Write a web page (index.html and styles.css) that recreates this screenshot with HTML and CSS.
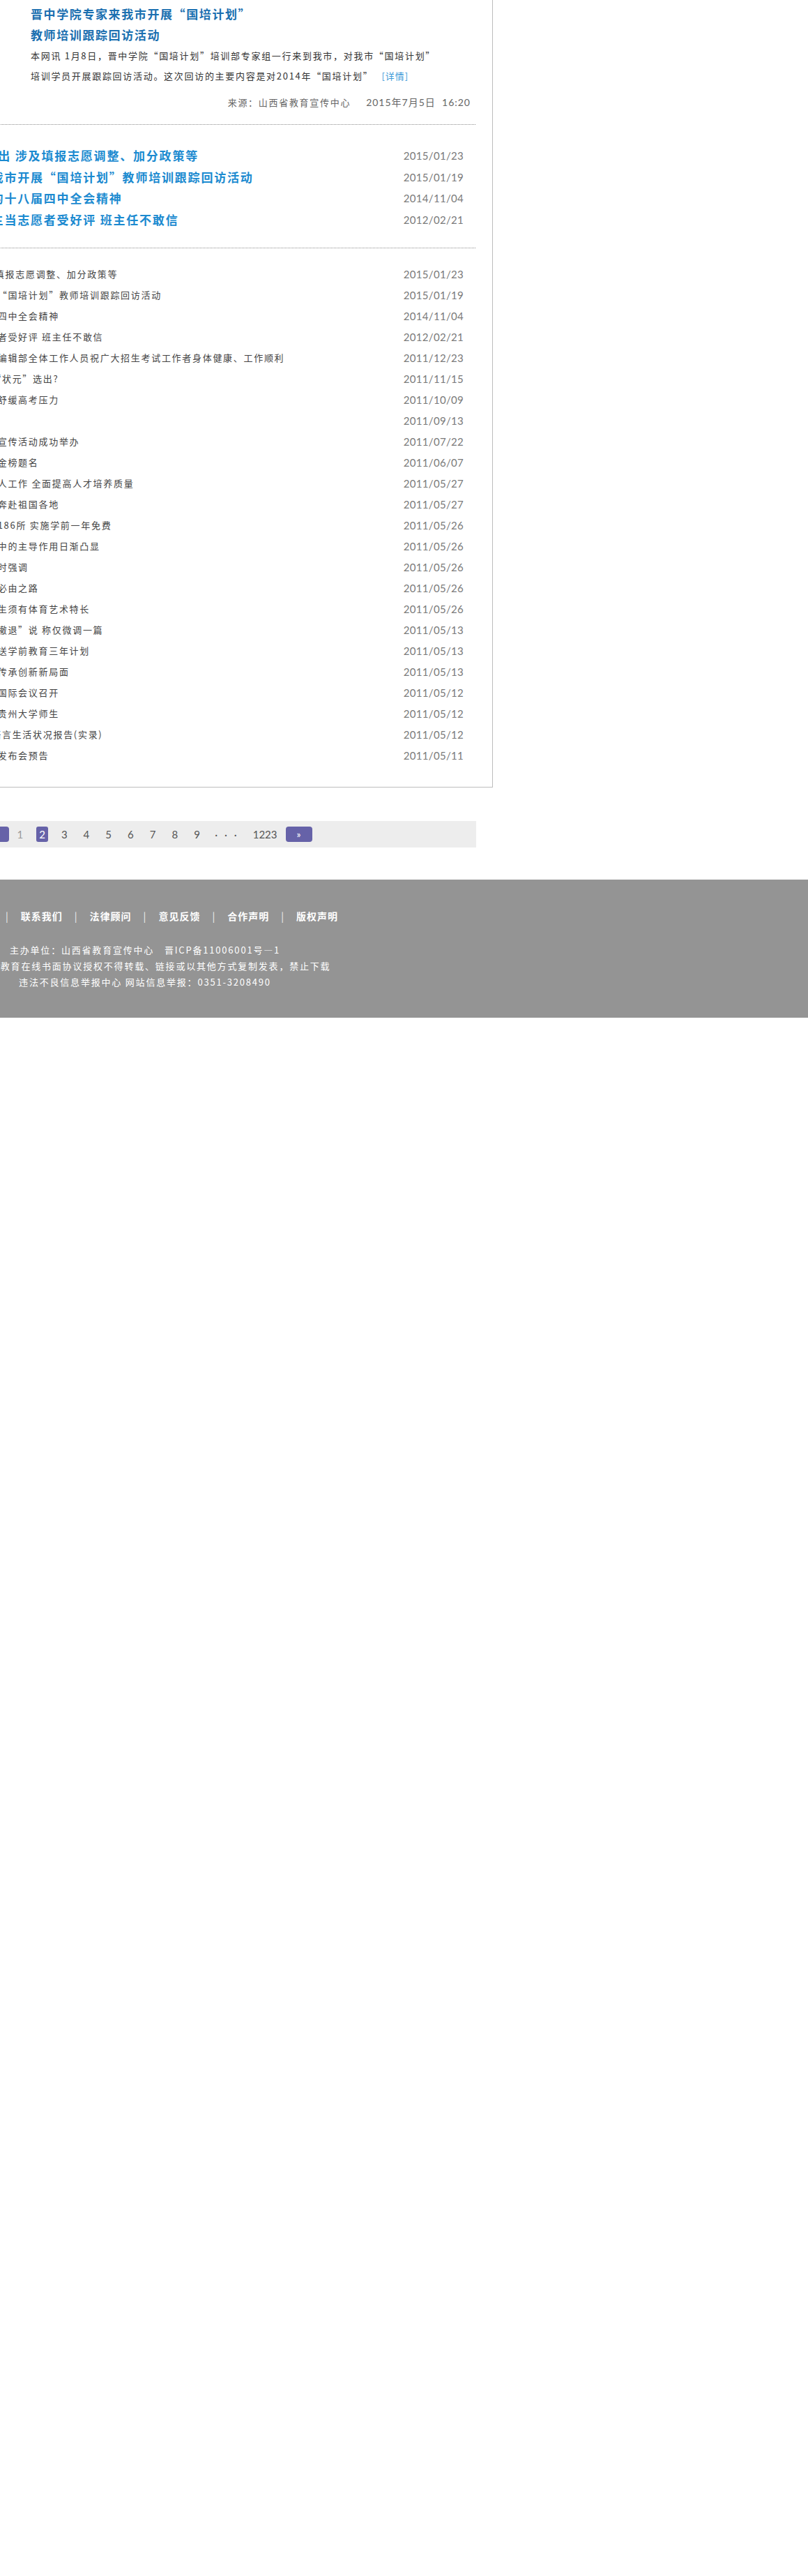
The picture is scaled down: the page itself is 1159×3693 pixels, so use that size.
FILE: index.html
```html
<!DOCTYPE html>
<html lang="zh-CN">
<head>
<meta charset="utf-8">
<title>教育新闻</title>
<link rel="stylesheet" href="styles.css">
</head>
<body>
<div class="page">
  <div class="news-box">
    <div class="headline">
      <div class="thumb"></div>
      <div class="headline-body">
        <h2 class="headline-title"><a href="#">晋中学院专家来我市开展“国培计划”<br>教师培训跟踪回访活动</a></h2>
        <p class="headline-text">本网讯 1月8日，晋中学院“国培计划”培训部专家组一行来到我市，对我市“国培计划”<br>培训学员开展跟踪回访活动。这次回访的主要内容是对2014年“国培计划”<a class="more" href="#">[详情]</a></p>
        <div class="headline-meta"><span>来源：山西省教育宣传中心</span><span class="meta-date">2015年7月5日&nbsp;&nbsp;16:20</span></div>
      </div>
    </div>

    <ul class="hot-list">
      <li><a class="hot-title" href="#">2015年高考新政出 涉及填报志愿调整、加分政策等</a><span class="date">2015/01/23</span></li>
      <li><a class="hot-title" href="#">晋中学院专家来我市开展“国培计划”教师培训跟踪回访活动</a><span class="date">2015/01/19</span></li>
      <li><a class="hot-title" href="#">深入学习贯彻党的十八届四中全会精神</a><span class="date">2014/11/04</span></li>
      <li><a class="hot-title" href="#">太原一中高三学生当志愿者受好评 班主任不敢信</a><span class="date">2012/02/21</span></li>
    </ul>

    <ul class="news-list">
      <li><a class="news-title" href="#">2015年高考新政出 涉及填报志愿调整、加分政策等</a><span class="date">2015/01/23</span></li>
      <li><a class="news-title" href="#">晋中学院专家来我市开展“国培计划”教师培训跟踪回访活动</a><span class="date">2015/01/19</span></li>
      <li><a class="news-title" href="#">深入学习贯彻党的十八届四中全会精神</a><span class="date">2014/11/04</span></li>
      <li><a class="news-title" href="#">太原一中高三学生当志愿者受好评 班主任不敢信</a><span class="date">2012/02/21</span></li>
      <li><a class="news-title" href="#">新春佳节山西招生考试网编辑部全体工作人员祝广大招生考试工作者身体健康、工作顺利</a><span class="date">2011/12/23</span></li>
      <li><a class="news-title" href="#">2011年山西高考文理科“状元”选出?</a><span class="date">2011/11/15</span></li>
      <li><a class="news-title" href="#">心理专家教考生家长如何舒缓高考压力</a><span class="date">2011/10/09</span></li>
      <li><a class="news-title" href="#">全省教师节表彰大会召开</a><span class="date">2011/09/13</span></li>
      <li><a class="news-title" href="#">全国中小学生安全教育日宣传活动成功举办</a><span class="date">2011/07/22</span></li>
      <li><a class="news-title" href="#">祝福所有参加高考的考生金榜题名</a><span class="date">2011/06/07</span></li>
      <li><a class="news-title" href="#">切实加强高等学校教书育人工作 全面提高人才培养质量</a><span class="date">2011/05/27</span></li>
      <li><a class="news-title" href="#">我省万余名高校毕业生将奔赴祖国各地</a><span class="date">2011/05/27</span></li>
      <li><a class="news-title" href="#">全省今年新建公办幼儿园186所 实施学前一年免费</a><span class="date">2011/05/26</span></li>
      <li><a class="news-title" href="#">公办园在山西省学前教育中的主导作用日渐凸显</a><span class="date">2011/05/26</span></li>
      <li><a class="news-title" href="#">副省长调研学前教育工作时强调</a><span class="date">2011/05/26</span></li>
      <li><a class="news-title" href="#">城乡教育一体化是发展的必由之路</a><span class="date">2011/05/26</span></li>
      <li><a class="news-title" href="#">山西要求今后每名中小学生须有体育艺术特长</a><span class="date">2011/05/26</span></li>
      <li><a class="news-title" href="#">教育部否认鲁迅作品“大撤退”说 称仅微调一篇</a><span class="date">2011/05/13</span></li>
      <li><a class="news-title" href="#">全省各县市区五月底前报送学前教育三年计划</a><span class="date">2011/05/13</span></li>
      <li><a class="news-title" href="#">努力开创山西省高校文化传承创新新局面</a><span class="date">2011/05/13</span></li>
      <li><a class="news-title" href="#">第二届高等教育质量保障国际会议召开</a><span class="date">2011/05/12</span></li>
      <li><a class="news-title" href="#">国务院领导同志看望慰问贵州大学师生</a><span class="date">2011/05/12</span></li>
      <li><a class="news-title" href="#">教育部发布2010年中国语言生活状况报告(实录)</a><span class="date">2011/05/12</span></li>
      <li><a class="news-title" href="#">教育部语言文字工作新闻发布会预告</a><span class="date">2011/05/11</span></li>
    </ul>
  </div>

  <div class="pager">
    <a class="pager-btn" href="#">«</a>
    <a class="pager-num visited" href="#">1</a>
    <span class="pager-num current">2</span>
    <a class="pager-num" href="#">3</a>
    <a class="pager-num" href="#">4</a>
    <a class="pager-num" href="#">5</a>
    <a class="pager-num" href="#">6</a>
    <a class="pager-num" href="#">7</a>
    <a class="pager-num" href="#">8</a>
    <a class="pager-num" href="#">9</a>
    <span class="pager-dots">· · ·</span>
    <a class="pager-num pager-last" href="#">1223</a>
    <a class="pager-btn pager-next" href="#">»</a>
  </div>
</div>

<footer class="site-footer">
  <div class="footer-inner">
    <div class="footer-links">
      <a href="#">关于我们</a><span class="sep">|</span><a href="#">联系我们</a><span class="sep">|</span><a href="#">法律顾问</a><span class="sep">|</span><a href="#">意见反馈</a><span class="sep">|</span><a href="#">合作声明</a><span class="sep">|</span><a href="#">版权声明</a>
    </div>
    <div class="footer-info">
      <p>主办单位：山西省教育宣传中心　晋ICP备11006001号—1</p>
      <p>未经山西教育在线书面协议授权不得转载、链接或以其他方式复制发表，禁止下载</p>
      <p>违法不良信息举报中心 网站信息举报：0351-3208490</p>
    </div>
  </div>
</footer>
</body>
</html>
```

FILE: styles.css
```css
html, body {
  margin: 0;
  padding: 0;
  background: #fff;
}

body {
  font-family: "Noto Sans CJK SC", "Liberation Sans", sans-serif;
  color: #333;
  overflow-x: hidden;
}

a {
  color: inherit;
  text-decoration: none;
}

.page {
  margin-left: -186px;
  width: 893px;
}

/* ---------- news box ---------- */
.news-box {
  width: 847px;
  padding: 0 24px 30px 20px;
  border: 1px solid #bdbdbd;
  border-top: 0;
}

.headline {
  display: flex;
  padding: 5px 0 17px;
  border-bottom: 1px dotted #8c8c8c;
}

.thumb {
  flex: none;
  width: 150px;
  height: 150px;
  margin-right: 59px;
  background: #d9d9d9;
}

.headline-body {
  flex: 1;
  min-width: 0;
}

.headline-title {
  margin: 0;
  font-size: 17px;
  line-height: 30px;
  font-weight: 700;
  letter-spacing: 1.6px;
  color: #1a6fb0;
}

.headline-text {
  margin: 0;
  font-size: 13px;
  line-height: 29px;
  letter-spacing: 1.7px;
  color: #333;
}

.more {
  margin-left: 12px;
  color: #3c9ad8;
  letter-spacing: 1px;
}

.headline-meta {
  margin-top: 9px;
  padding-right: 7px;
  font-size: 13px;
  line-height: 29px;
  letter-spacing: 1.7px;
  color: #666;
  text-align: right;
}

.meta-date {
  margin-left: 22px;
  font-family: "Lato", "Noto Sans CJK SC", sans-serif;
  font-size: 14px;
  letter-spacing: 1px;
}

/* ---------- lists ---------- */
.hot-list,
.news-list {
  list-style: none;
  margin: 0;
}

.hot-list {
  padding: 29px 0 25px 21px;
  border-bottom: 1px dotted #8c8c8c;
}

.hot-list li {
  display: flex;
  justify-content: space-between;
  height: 30.5px;
  line-height: 30.5px;
}

.hot-title {
  font-size: 17px;
  font-weight: 700;
  letter-spacing: 1.8px;
  color: #1b8ad0;
  white-space: nowrap;
}

.news-list {
  padding: 22px 0 0;
}

.news-list li {
  display: flex;
  justify-content: space-between;
  height: 30px;
  line-height: 30px;
}

.news-title {
  font-size: 13px;
  letter-spacing: 1.7px;
  color: #444;
  white-space: nowrap;
}

.date {
  margin-right: 17px;
  font-family: "Lato", sans-serif;
  font-weight: 400;
  font-size: 15px;
  letter-spacing: 0.3px;
  color: #7a7a7a;
}

/* ---------- pager ---------- */
.pager {
  box-sizing: border-box;
  display: flex;
  align-items: center;
  width: 869px;
  height: 38px;
  margin-top: 48px;
  padding-left: 161px;
  background: #ededed;
  font-family: "Lato", sans-serif;
  font-size: 15px;
  color: #555;
}

.pager-btn {
  width: 38px;
  height: 22px;
  line-height: 21px;
  border-radius: 4px;
  background: #6662a8;
  color: #fff;
  text-align: center;
  font-size: 14px;
}

.pager-num {
  height: 22px;
  line-height: 22px;
  padding: 0 4px;
  margin: 0 7.5px;
  border-radius: 3px;
}

.pager-num.visited {
  color: #999;
}

.pager-num.current {
  background: #6662a8;
  color: #fff;
}

.pager-dots {
  margin: 0 12px 0 10px;
  letter-spacing: 3px;
}

.pager-last {
  margin: 0 12px 0 8px;
  padding: 0;
}

/* ---------- footer ---------- */
.site-footer {
  margin-top: 46px;
  padding: 40px 0;
  background: #949494;
  color: #fff;
}

.footer-inner {
  width: 600px;
  margin-left: -92px;
  text-align: center;
}

.footer-links {
  font-size: 14px;
  line-height: 24px;
  font-weight: 700;
  letter-spacing: 1px;
}

.footer-links .sep {
  margin: 0 17px;
  font-weight: 400;
  color: #f2f2f2;
}

.footer-info {
  margin-top: 25px;
  font-size: 13px;
  line-height: 23px;
  letter-spacing: 1.8px;
}

.footer-info p {
  margin: 0;
}
```
